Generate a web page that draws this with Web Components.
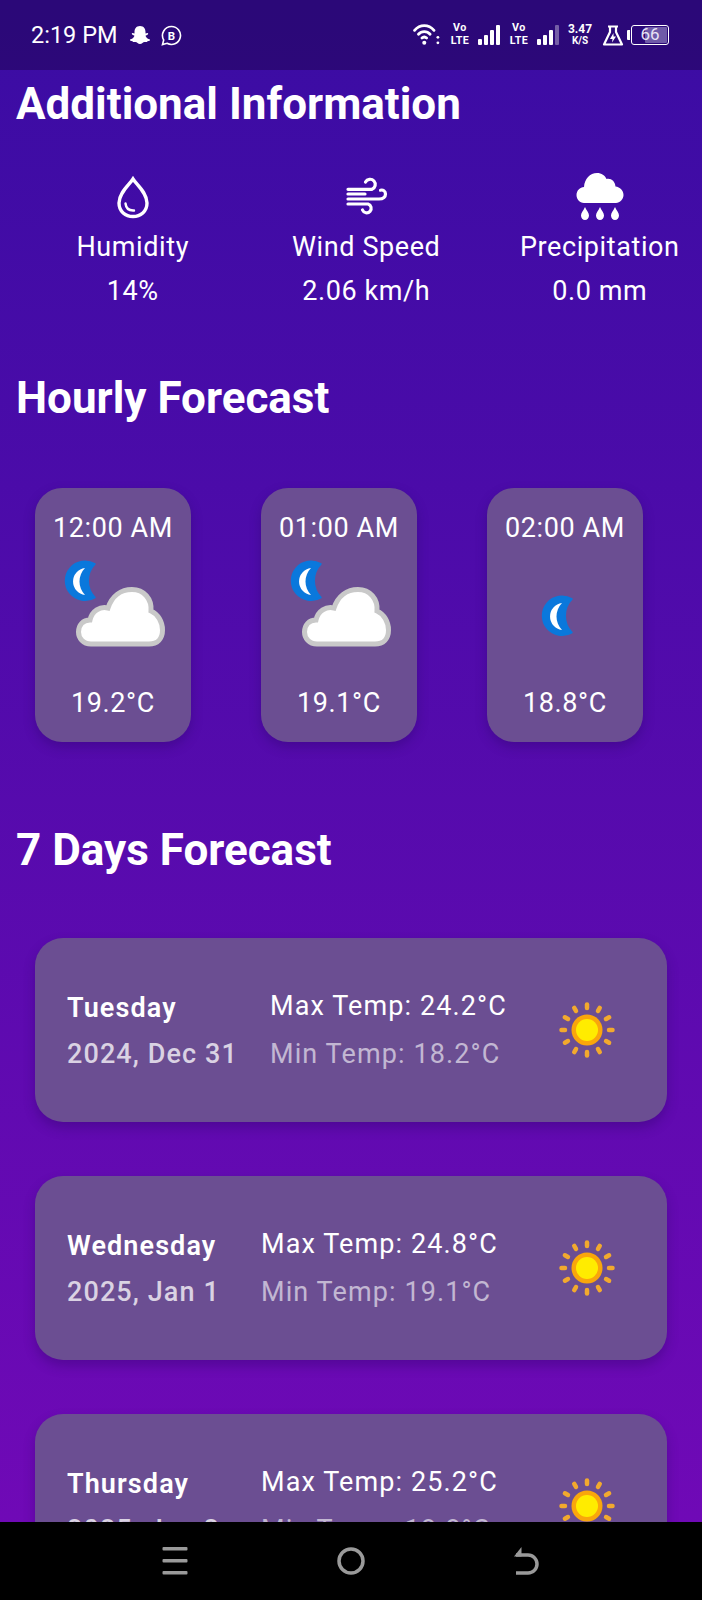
<!DOCTYPE html>
<html lang="en">
<head>
<meta charset="utf-8">
<title>Weather</title>
<style>
  html, body { margin: 0; padding: 0; background: #000; }
  body { font-family: Roboto, "Liberation Sans", sans-serif; }
</style>
</head>
<body>
<weather-app>
  <status-bar slot="top"></status-bar>

  <section-title>Additional Information</section-title>
  <div class="stats" style="display:grid;grid-template-columns:repeat(3,233.5px);padding-left:16px;height:180px;width:686px;">
    <info-stat icon="drop" label="Humidity" value="14%"></info-stat>
    <info-stat icon="wind" label="Wind Speed" value="2.06 km/h"></info-stat>
    <info-stat icon="rain" label="Precipitation" value="0.0 mm"></info-stat>
  </div>

  <section-title style="margin-top:66px">Hourly Forecast</section-title>
  <div style="display:flex;gap:70px;padding-left:35px;margin-top:66px;">
    <hour-card time="12:00 AM" temp="19.2°C" icon="cloud-moon"></hour-card>
    <hour-card time="01:00 AM" temp="19.1°C" icon="cloud-moon"></hour-card>
    <hour-card time="02:00 AM" temp="18.8°C" icon="moon"></hour-card>
  </div>

  <section-title style="margin-top:84px">7 Days Forecast</section-title>
  <div style="display:flex;flex-direction:column;gap:54px;padding:64px 35px 0;">
    <day-card day="Tuesday" date="2024, Dec 31" max="24.2" min="18.2"></day-card>
    <day-card day="Wednesday" date="2025, Jan 1" max="24.8" min="19.1"></day-card>
    <day-card day="Thursday" date="2025, Jan 2" max="25.2" min="18.8"></day-card>
  </div>

  <nav-bar slot="bottom"></nav-bar>
</weather-app>

<script>
'use strict';

(function() {
  // small helper, every element does the same thing in its constructor
  function shadowOf(el, html) {
    const shadow = el.attachShadow({ mode: 'open' });
    shadow.innerHTML = html;
    return shadow;
  }

  const SVG_ICONS = {
    drop: `<svg width="50" height="50" viewBox="0 0 50 50" fill="none" stroke="#fff">
      <path stroke-width="3.4" d="M25 7C21.500 12.500 11 20.500 11 31C11 39.500 17.500 44.500 25 44.500C32.500 44.500 39 39.500 39 31C39 20.500 28.500 12.500 25 7Z"/>
      <path stroke-width="2.4" stroke-linecap="round" d="M17.500 31.500C18 36 21 38.800 26 38.500"/>
    </svg>`,
    wind: `<svg width="50" height="50" viewBox="0 0 50 50" fill="none" stroke="#fff" stroke-width="3.2" stroke-linecap="round">
      <path d="M7 17.300H31A5.200 5.200 0 1 0 24.500 10"/>
      <path d="M7 22H24"/>
      <path d="M7 27H38C42.500 27 44.500 24.500 44.500 22C44.500 19 42 17.500 39.500 18.200"/>
      <path d="M7 32H27A4.500 4.500 0 1 1 21.500 38"/>
    </svg>`,
    rain: `<svg width="50" height="50" viewBox="0 0 50 50" fill="#fff">
      <path d="M9 31C4.500 31 1.500 27 1.500 23C1.500 18.500 5 15.500 9 15C9.500 7 15 1 22 1C26.500 1 30 3.500 31.500 7C36 6 40 9 40.500 14.500C45 15 48.500 18.500 48.500 23C48.500 27 45 31 41 31Z"/>
      <path d="M10 35C11.500 38.500 14 40.500 14 43.500C14 46 12.200 48 10 48C7.800 48 6 46 6 43.500C6 40.500 8.500 38.500 10 35Z"/>
      <path d="M25 35C26.500 38.500 29 40.500 29 43.500C29 46 27.200 48 25 48C22.800 48 21 46 21 43.500C21 40.500 23.500 38.500 25 35Z"/>
      <path d="M40 35C41.500 38.500 44 40.500 44 43.500C44 46 42.200 48 40 48C37.800 48 36 46 36 43.500C36 40.500 38.500 38.500 40 35Z"/>
    </svg>`
  };

  const MOON_SHAPES = `<path fill="#0a78dc" stroke="#0a78dc" stroke-width="1.5" stroke-linejoin="round" d="M32 3A19.500 19.500 0 1 0 32 36.500A24 24 0 0 1 32 3Z"/>
    <path fill="#fff" filter="url(#soft)" d="M22 7A13.600 13.600 0 0 0 22 34A19.300 19.300 0 0 1 22 7Z"/>`;

  const CLOUD = `<path filter="url(#soft)" fill="#fff" stroke="#c9c9c9" stroke-width="5"
    d="M42 92C34 92 29.500 86 29.500 80C29.500 73 34 68 41 68C43 59 51 54 59 56C63 44 72 37.500 83 37.500C95 37.500 103 47 102 59C109 62 113.500 70 113.500 78C113.500 87 108 92 100 92Z"/>`;

  const SOFT = `<defs><filter id="soft" x="-10%" y="-10%" width="120%" height="120%"><feGaussianBlur stdDeviation=".6"/></filter></defs>`;

  class WeatherIcon extends HTMLElement {
    constructor() {
      super();
      const kind = this.getAttribute('kind');
      let body = '';

      if (kind === 'cloud-moon') {
        body = SOFT + `<g transform="translate(14 9)">${MOON_SHAPES}</g>` + CLOUD;
      } else if (kind === 'moon') {
        body = SOFT + `<g transform="translate(39 44)">${MOON_SHAPES}</g>`;
      }

      shadowOf(this, `
        <style>
          :host { display: block; width: 128px; height: 128px; }
          svg { display: block; }
        </style>
        <svg width="128" height="128" viewBox="0 0 128 128">${body}</svg>
      `);
    }
  }

  class SunIcon extends HTMLElement {
    constructor() {
      super();
      let rays = '';
      for (let i = 0; i < 12; i++) {
        rays += `<line x1="46" y1="20.500" x2="46" y2="24" transform="rotate(${i * 30} 46 46)"/>`;
      }
      shadowOf(this, `
        <style>
          :host { display: block; width: 92px; height: 92px; flex: none; }
          svg { display: block; }
        </style>
        <svg width="92" height="92" viewBox="0 0 92 92">
          <g stroke="#f2a92e" stroke-width="4.500" stroke-linecap="round">${rays}</g>
          <circle cx="46" cy="46" r="15.500" fill="#f9a60c"/>
          <circle cx="46" cy="46" r="11" fill="#ffec00"/>
        </svg>
      `);
    }
  }

  class WeatherApp extends HTMLElement {
    constructor() {
      super();
      shadowOf(this, `
        <style>
          :host {
            display: flex;
            flex-direction: column;
            height: 1600px;
            width: 702px;
            overflow: hidden;
            color: #fff;
            font-family: Roboto, "Liberation Sans", sans-serif;
            background: linear-gradient(180deg, #3a0ca3 0%, #7209b7 100%);
          }
          main { flex: 1; min-height: 0; overflow: hidden; padding-top: 10px; }
        </style>
        <slot name="top"></slot>
        <main><slot></slot></main>
        <slot name="bottom"></slot>
      `);
    }
  }

  class SectionTitle extends HTMLElement {
    constructor() {
      super();
      shadowOf(this, `
        <style>
          :host {
            display: block;
            padding-left: 16px;
            height: 48px;
            font-size: 44px;
            line-height: 48px;
            font-weight: 700;
            color: #fff;
            white-space: nowrap;
          }
        </style>
        <slot></slot>
      `);
    }
  }

  class InfoStat extends HTMLElement {
    constructor() {
      super();
      shadowOf(this, `
        <style>
          :host {
            display: flex;
            flex-direction: column;
            align-items: center;
            font-size: 27px;
            letter-spacing: .6px;
            white-space: nowrap;
            margin-top: 44px;
          }
          .ico { height: 50px; width: 50px; }
          .ico svg { display: block; }
          .label { line-height: 34px; margin-top: 8px; }
          .value { line-height: 34px; margin-top: 10px; }
        </style>
        <div class="ico">${SVG_ICONS[this.getAttribute('icon')]}</div>
        <div class="label">${this.getAttribute('label')}</div>
        <div class="value">${this.getAttribute('value')}</div>
      `);
    }
  }

  class HourCard extends HTMLElement {
    constructor() {
      super();
      shadowOf(this, `
        <style>
          :host {
            display: flex;
            flex-direction: column;
            align-items: center;
            justify-content: space-between;
            box-sizing: border-box;
            flex: none;
            width: 156px;
            height: 254px;
            padding: 23px 0 22px;
            border-radius: 27px;
            background: #6b4e92;
            box-shadow: 0 5px 12px rgba(30, 0, 80, .28);
            font-size: 27px;
            letter-spacing: .6px;
            white-space: nowrap;
          }
          .line { line-height: 34px; height: 34px; }
          weather-icon { margin: -6px 0; }
        </style>
        <div class="line">${this.getAttribute('time')}</div>
        <weather-icon kind="${this.getAttribute('icon')}"></weather-icon>
        <div class="line">${this.getAttribute('temp')}</div>
      `);
    }
  }

  class DayCard extends HTMLElement {
    constructor() {
      super();
      shadowOf(this, `
        <style>
          :host {
            display: flex;
            align-items: center;
            justify-content: space-between;
            box-sizing: border-box;
            height: 184px;
            padding: 0 34px 0 32px;
            border-radius: 28px;
            background: #6b4e92;
            box-shadow: 0 6px 12px rgba(30, 0, 80, .28);
            font-size: 27px;
            letter-spacing: 1.1px;
            white-space: nowrap;
          }
          .col { display: flex; flex-direction: column; gap: 14px; }
          .col div { line-height: 34px; }
          .names { gap: 12px; padding-top: 2px; }
          .temps { margin-right: 2px; }
          .day { font-weight: 600; color: #fff; }
          .date { font-weight: 500; color: rgba(255, 255, 255, .75); }
          .min { color: rgba(255, 255, 255, .6); }
        </style>
        <div class="col names">
          <div class="day">${this.getAttribute('day')}</div>
          <div class="date">${this.getAttribute('date')}</div>
        </div>
        <div class="col temps">
          <div>Max Temp: ${this.getAttribute('max')}°C</div>
          <div class="min">Min Temp: ${this.getAttribute('min')}°C</div>
        </div>
        <sun-icon></sun-icon>
      `);
    }
  }

  class StatusBar extends HTMLElement {
    constructor() {
      super();
      const bars = last => `<svg width="22" height="21" viewBox="0 0 22 21" fill="#fff">
        <rect x="0" y="14" width="4" height="6" rx="1"/>
        <rect x="6" y="10" width="4" height="10" rx="1"/>
        <rect x="12" y="5" width="4" height="15" rx="1"/>
        <rect x="18" y="0" width="4" height="20" rx="1" opacity="${last}"/>
      </svg>`;
      const volte = `<div class="volte"><span>Vo</span><span>LTE</span></div>`;

      shadowOf(this, `
        <style>
          :host {
            display: flex;
            align-items: center;
            flex: none;
            height: 70px;
            padding: 0 33px 0 31px;
            box-sizing: border-box;
            background: rgba(0, 0, 0, .26);
            color: #fff;
            font-size: 23.5px;
          }
          svg { display: block; flex: none; }
          .time { margin-right: 13px; white-space: nowrap; }
          .left { display: flex; align-items: center; gap: 10px; }
          .right { display: flex; align-items: center; margin-left: auto; }
          .volte {
            display: flex;
            flex-direction: column;
            align-items: center;
            font-size: 10.7px;
            letter-spacing: .5px;
            font-weight: 700;
            line-height: 12.6px;
            width: 20px;
            margin: 0 8px 0 9px;
          }
          .speed {
            display: flex;
            flex-direction: column;
            align-items: center;
            font-weight: 700;
            font-size: 12px;
            line-height: 12px;
            width: 26px;
            margin: 0 9px 0 8px;
          }
          .speed span + span { font-size: 10px; }
          .batt { display: flex; align-items: center; margin-left: 3px; }
          .nub { width: 3px; height: 10px; background: #fff; border-radius: 1px 0 0 1px; margin-right: 1px; }
          .body {
            position: relative;
            width: 38px;
            height: 20px;
            box-sizing: border-box;
            border: 1.5px solid #fff;
            border-radius: 3px;
            font-size: 17px;
            line-height: 17px;
            text-align: center;
          }
          .fill { position: absolute; top: 1px; bottom: 1px; right: 1px; width: 62%; background: #6f5aa8; border-radius: 1px; }
          .pct { position: relative; color: #e8e4f5; }
        </style>
        <div class="left">
          <span class="time">2:19 PM</span>
          <svg width="22" height="20" viewBox="0 0 22 20" fill="#fff" style="margin-left:-11px"><path d="M11 1C15 1 16.500 4 16.500 7V8.500L18.500 8C19.500 8 19.500 9.500 18 10L16.500 10.700C17 12.500 19 14 21 14.500C21.500 15.500 20 16 18.500 16.300C18 17.500 17 17 15.500 17C14 17 13 19 11 19C9 19 8 17 6.500 17C5 17 4 17.500 3.500 16.300C2 16 .5 15.500 1 14.500C3 14 5 12.500 5.500 10.700L4 10C2.500 9.500 2.500 8 3.500 8L5.500 8.500V7C5.500 4 7 1 11 1Z"/></svg>
          <svg width="21" height="21" viewBox="0 0 21 21" fill="none">
            <path stroke="#fff" stroke-width="1.600" d="M10.500 1.500A9 9 0 1 1 6 18.300L1.500 19.500L2.700 15A9 9 0 0 1 10.500 1.500Z"/>
            <text x="10.500" y="14.500" text-anchor="middle" font-family="Roboto, sans-serif" font-size="11.500" font-weight="700" fill="#fff">B</text>
          </svg>
        </div>
        <div class="right">
          <svg width="28" height="24" viewBox="0 0 36 30" fill="none" stroke="#fff" stroke-width="3.600" stroke-linecap="round">
            <path d="M2 9C9 1 20 1 27 9"/><path d="M7 14C11 9.500 18 9.500 22 14"/><path d="M11.500 19C13.500 17 15.500 17 17.500 19"/>
            <circle cx="14.500" cy="25" r="2.600" fill="#fff" stroke="none"/>
            <circle cx="32" cy="18" r="1.800" fill="#fff" stroke="none"/><circle cx="32" cy="25" r="1.800" fill="#fff" stroke="none"/>
          </svg>
          ${volte}
          ${bars(1)}
          ${volte}
          ${bars(.35)}
          <div class="speed"><span>3.47</span><span>K/S</span></div>
          <svg width="22" height="21" viewBox="0 0 22 21" fill="none" stroke="#fff" stroke-width="2.200" stroke-linejoin="round">
            <path d="M6 1.500H16M8 1.500V7L2 19.500H20L14 7V1.500"/>
            <path fill="#fff" stroke="none" d="M11.500 8L8 14H10.500L10 17.500L14 11.500H11.500Z"/>
          </svg>
          <div class="batt">
            <div class="nub"></div>
            <div class="body"><div class="fill"></div><span class="pct">66</span></div>
          </div>
        </div>
      `);
    }
  }

  class NavBar extends HTMLElement {
    constructor() {
      super();
      shadowOf(this, `
        <style>
          :host {
            display: flex;
            align-items: center;
            justify-content: center;
            gap: 148px;
            flex: none;
            height: 78px;
            background: #000;
          }
          svg { display: block; }
        </style>
        <svg width="28" height="28" viewBox="0 0 28 28" fill="#9a9a9a">
          <rect x="1.500" y="0" width="25" height="3.500" rx="1"/><rect x="1.500" y="12" width="25" height="3.500" rx="1"/><rect x="1.500" y="24" width="25" height="3.500" rx="1"/>
        </svg>
        <svg width="28" height="28" viewBox="0 0 28 28" fill="none" stroke="#9a9a9a" stroke-width="3.500">
          <circle cx="14" cy="14" r="12"/>
        </svg>
        <svg width="28" height="28" viewBox="0 0 28 28" fill="none" stroke="#9a9a9a" stroke-width="3.500">
          <path d="M3 8H15A9 9 0 0 1 15 26H3"/>
          <path fill="#9a9a9a" stroke="none" d="M8.500 0V9.500H1Z"/>
        </svg>
      `);
    }
  }

  customElements.define('weather-icon', WeatherIcon);
  customElements.define('sun-icon', SunIcon);
  customElements.define('section-title', SectionTitle);
  customElements.define('info-stat', InfoStat);
  customElements.define('hour-card', HourCard);
  customElements.define('day-card', DayCard);
  customElements.define('status-bar', StatusBar);
  customElements.define('nav-bar', NavBar);
  customElements.define('weather-app', WeatherApp);
})();
</script>
</body>
</html>
